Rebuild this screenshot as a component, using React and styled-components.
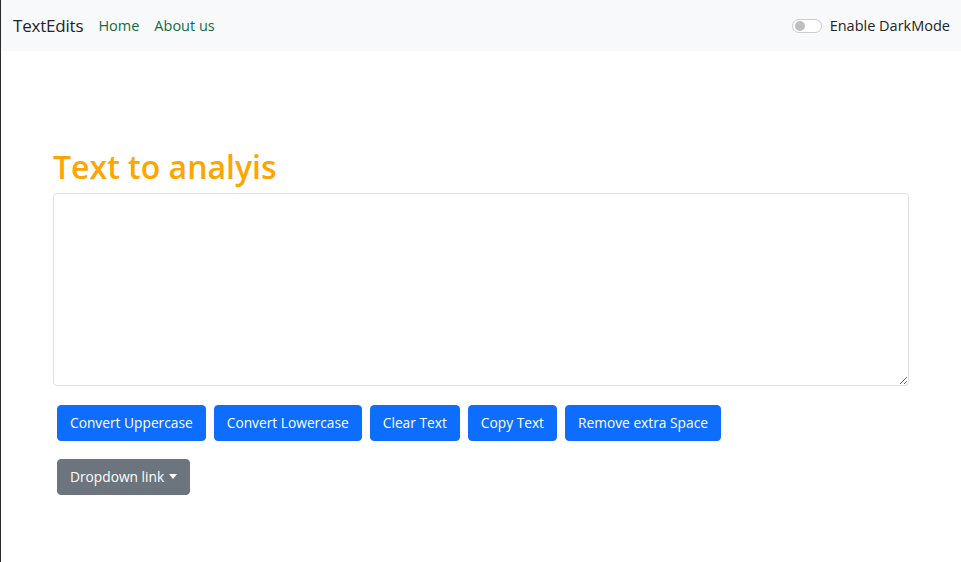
import styled, { createGlobalStyle } from "styled-components";

const Global = createGlobalStyle`
  html, body {
    margin: 0;
    padding: 0;
    background: #fff;
    font-family: "Segoe UI", "Open Sans", "Noto Sans", "Liberation Sans", sans-serif;
    color: #212529;
  }
`;

const Page = styled.div`
  min-height: 562px;
  border-left: 1px solid #2b2b2b;
  box-sizing: border-box;
`;

const Navbar = styled.nav`
  height: 51px;
  background: #f8f9fa;
  display: flex;
  align-items: center;
  justify-content: space-between;
  padding: 0 11px 0 12px;
  box-sizing: border-box;
`;

const NavLeft = styled.div`
  display: flex;
  align-items: center;
`;

const Brand = styled.span`
  font-size: 17px;
  color: #212529;
  margin-right: 15px;
  letter-spacing: -0.2px;
`;

const NavLink = styled.a`
  font-size: 14.5px;
  color: #146c43;
  text-decoration: none;
  margin-right: 15px;
`;

const SwitchWrap = styled.label`
  display: flex;
  align-items: center;
  gap: 8px;
  font-size: 14.5px;
  color: #212529;
`;

const Switch = styled.span`
  width: 30px;
  height: 14px;
  border: 1px solid #c9cdd1;
  border-radius: 8px;
  background: #fff;
  box-sizing: border-box;
  display: flex;
  align-items: center;
  padding-left: 2px;

  &::before {
    content: "";
    width: 10px;
    height: 10px;
    border-radius: 50%;
    background: #bfbfbf;
  }
`;

const Main = styled.main`
  padding: 98px 52px 0 52px;
`;

const Heading = styled.h1`
  margin: 0 0 7px 0;
  font-size: 32px;
  font-weight: 600;
  color: #ffa500;
  line-height: 1.15;
`;

const TextArea = styled.textarea`
  display: block;
  width: 100%;
  height: 193px;
  box-sizing: border-box;
  border: 1px solid #dee2e6;
  border-radius: 4px;
  resize: vertical;
  font-family: inherit;
  outline: none;
`;

const ButtonRow = styled.div`
  display: flex;
  gap: 8px;
  padding: 19px 4px 0;
`;

const Button = styled.button`
  height: 36px;
  padding: 0 12px;
  border: 1px solid ${(p) => (p.$gray ? "#6c757d" : "#0d6efd")};
  background: ${(p) => (p.$gray ? "#6c757d" : "#0d6efd")};
  color: #fff;
  border-radius: 4px;
  font-family: inherit;
  font-size: 13.75px;
  display: flex;
  align-items: center;
  gap: 4px;
  cursor: pointer;
`;

const Caret = styled.span`
  width: 0;
  height: 0;
  border-left: 4px solid transparent;
  border-right: 4px solid transparent;
  border-top: 5px solid #fff;
  margin-left: 1px;
`;

const DropRow = styled.div`
  padding: 18px 4px 0;
  display: flex;
`;

export default function App() {
  return (
    <Page>
      <Global />
      <Navbar>
        <NavLeft>
          <Brand>TextEdits</Brand>
          <NavLink href="#">Home</NavLink>
          <NavLink href="#">About us</NavLink>
        </NavLeft>
        <SwitchWrap>
          <Switch />
          Enable DarkMode
        </SwitchWrap>
      </Navbar>
      <Main>
        <Heading>Text to analyis</Heading>
        <TextArea />
        <ButtonRow>
          <Button>Convert Uppercase</Button>
          <Button>Convert Lowercase</Button>
          <Button>Clear Text</Button>
          <Button>Copy Text</Button>
          <Button>Remove extra Space</Button>
        </ButtonRow>
        <DropRow>
          <Button $gray>
            Dropdown link <Caret />
          </Button>
        </DropRow>
      </Main>
    </Page>
  );
}
